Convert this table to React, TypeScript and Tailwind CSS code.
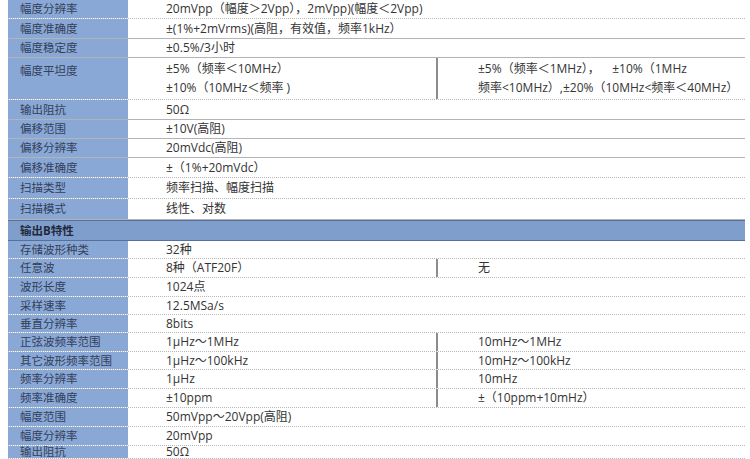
type Row = {
  label: string;
  h: number;
  left?: React.ReactNode;
  right?: React.ReactNode;
  line?: 'dot' | 'solid';
  top?: boolean;
};

const groupA: Row[] = [
  { label: '幅度分辨率', h: 19, left: '20mVpp（幅度＞2Vpp），2mVpp)(幅度＜2Vpp)' },
  { label: '幅度准确度', h: 20, left: '±(1%+2mVrms)(高阻，有效值，频率1kHz）', line: 'solid' },
  { label: '幅度稳定度', h: 19, left: '±0.5%/3小时', line: 'solid' },
  {
    label: '幅度平坦度',
    h: 42,
    top: true,
    left: (
      <div className="flex flex-col gap-[7px]">
        <span>±5%（频率＜10MHz）</span>
        <span>±10%（10MHz＜频率 )</span>
      </div>
    ),
    right: (
      <div className="flex flex-col gap-[7px]">
        <span>±5%（频率＜1MHz），&nbsp;&nbsp;&nbsp;&nbsp;±10%（1MHz</span>
        <span>频率&lt;10MHz）,±20%（10MHz&lt;频率＜40MHz）</span>
      </div>
    ),
  },
  { label: '输出阻抗', h: 20, left: '50Ω', line: 'solid' },
  { label: '偏移范围', h: 19, left: '±10V(高阻)', line: 'solid' },
  { label: '偏移分辨率', h: 19, left: '20mVdc(高阻)', line: 'solid' },
  { label: '偏移准确度', h: 20, left: '±（1%+20mVdc）' },
  { label: '扫描类型', h: 21, left: '频率扫描、幅度扫描' },
  { label: '扫描模式', h: 21, left: '线性、对数', line: 'solid' },
];

const groupB: Row[] = [
  { label: '存储波形种类', h: 18, left: '32种' },
  { label: '任意波', h: 19, left: '8种（ATF20F）', right: '无' },
  { label: '波形长度', h: 19, left: '1024点' },
  { label: '采样速率', h: 18, left: '12.5MSa/s' },
  { label: '垂直分辨率', h: 18, left: '8bits' },
  { label: '正弦波频率范围', h: 19, left: '1μHz～1MHz', right: '10mHz～1MHz' },
  { label: '其它波形频率范围', h: 18, left: '1μHz～100kHz', right: '10mHz～100kHz' },
  { label: '频率分辨率', h: 19, left: '1μHz', right: '10mHz' },
  { label: '频率准确度', h: 19, left: '±10ppm', right: '±（10ppm+10mHz）' },
  { label: '幅度范围', h: 19, left: '50mVpp～20Vpp(高阻)' },
  { label: '幅度分辨率', h: 19, left: '20mVpp' },
  { label: '输出阻抗', h: 13, left: '50Ω' },
];

function SpecRow({ row }: { row: Row }) {
  return (
    <div
      className={
        row.line === 'solid'
          ? 'flex border-b border-[#b4b4b4]'
          : 'flex border-b border-dotted border-[#b8b8b8]'
      }
      style={{ height: row.h }}
    >
      <div
        className={
          row.top
            ? 'flex w-[120px] shrink-0 items-start bg-[#8aa8d5] pt-[7px] pl-[12px] text-[11.5px] text-[#33405a]'
            : 'flex w-[120px] shrink-0 items-center bg-[#8aa8d5] pl-[12px] text-[11.5px] text-[#33405a]'
        }
      >
        {row.label}
      </div>
      <div className="flex flex-1 items-center">
        <div
          className={
            row.right
              ? 'flex h-full w-[310px] items-center border-r-2 border-[#8c8c8c] pl-[38px]'
              : 'flex h-full items-center pl-[38px]'
          }
        >
          {row.left}
        </div>
        {row.right && <div className="flex h-full items-center pl-[40px]">{row.right}</div>}
      </div>
    </div>
  );
}

export default function App() {
  return (
    <div
      className="h-[459px] overflow-hidden bg-white pl-[8px] text-[12px] leading-none text-[#333]"
      style={{ fontFamily: '"Open Sans", "Noto Sans CJK SC", sans-serif' }}
    >
      <div className="w-[737px]">
        {groupA.map((row, i) => (
          <SpecRow key={i} row={row} />
        ))}
        <div className="flex h-[21px] items-center border-y border-[#55709a] bg-[#7f9ecb] pl-[12px] text-[11.5px] font-bold text-[#1f2a3d]">
          输出B特性
        </div>
        {groupB.map((row, i) => (
          <SpecRow key={i} row={row} />
        ))}
      </div>
    </div>
  );
}
